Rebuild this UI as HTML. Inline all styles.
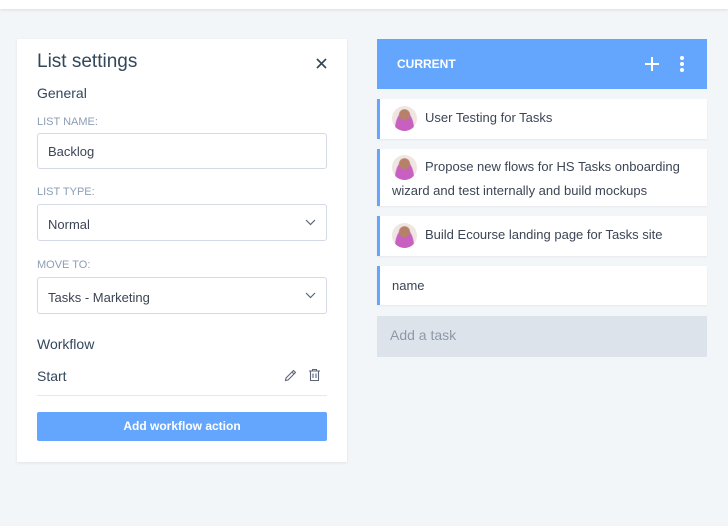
<!DOCTYPE html>
<html><head><style>
*{box-sizing:border-box;margin:0;padding:0}
body{width:728px;height:526px;background:#f3f6f9;font-family:"Liberation Sans",sans-serif;position:relative;overflow:hidden;color:#33475b}
.top{position:absolute;left:0;top:0;width:728px;height:9px;background:#fff;box-shadow:0 1px 3px rgba(0,0,0,.1)}
.panel{position:absolute;left:17px;top:39px;width:330px;height:423px;background:#fff;box-shadow:0 1px 3px rgba(0,0,0,.08)}
.a{position:absolute}
.lbl{font-size:11px;color:#8c9db3;left:20px}
.inp{left:20px;width:290px;border:1px solid #d4d9e4;border-radius:3px;font-size:13px;padding:0 10px;color:#3c4555}
.chev{position:absolute;right:10px;top:14px}
.hdr{position:absolute;left:377px;top:39px;width:330px;height:50px;background:#64a6fe;color:#fff}
.card{position:absolute;left:377px;width:330px;background:#fff;border-left:3px solid #64a6fe;font-size:13px;color:#3c4555;box-shadow:0 1px 2px rgba(0,0,0,.06)}
.av{display:inline-block;width:25px;height:25px;border-radius:50%;background:radial-gradient(circle at 50% 35%,#b7806a 0 5px,transparent 6px),radial-gradient(ellipse at 50% 95%,#c760c0 0 9px,transparent 10px),#efe6e2;vertical-align:middle;margin-right:8px}
</style></head><body>
<div class="top"></div>
<div class="panel">
<div class="a" style="left:20px;top:12px;font-size:19px;color:#33475b">List settings</div>
<svg class="a" style="left:299px;top:19px" width="11" height="11" viewBox="0 0 11 11"><path d="M1 1L10 10M10 1L1 10" stroke="#33475b" stroke-width="1.6"/></svg>
<div class="a" style="left:20px;top:46px;font-size:14px">General</div>
<div class="a lbl" style="top:77px">LIST NAME:</div>
<div class="a inp" style="top:94px;height:36px;line-height:35px">Backlog</div>
<div class="a lbl" style="top:147px">LIST TYPE:</div>
<div class="a inp" style="top:165px;height:37px;line-height:39px">Normal<svg class="chev" width="11" height="7" viewBox="0 0 11 7"><path d="M1 1L5.5 5.5L10 1" stroke="#5a6678" fill="none" stroke-width="1.2"/></svg></div>
<div class="a lbl" style="top:220px">MOVE TO:</div>
<div class="a inp" style="top:238px;height:37px;line-height:39px">Tasks - Marketing<svg class="chev" width="11" height="7" viewBox="0 0 11 7"><path d="M1 1L5.5 5.5L10 1" stroke="#5a6678" fill="none" stroke-width="1.2"/></svg></div>
<div class="a" style="left:20px;top:297px;font-size:14px">Workflow</div>
<div class="a" style="left:20px;top:329px;font-size:14px">Start</div>
<svg class="a" style="left:267px;top:330px" width="13" height="13" viewBox="0 0 13 13"><path d="M1.5 11.5L2 9L9.5 1.5L11.5 3.5L4 11Z M8 3L10 5" stroke="#5a6678" fill="none" stroke-width="1.1"/></svg>
<svg class="a" style="left:291px;top:329px" width="13" height="14" viewBox="0 0 13 14"><path d="M1 3H12M4.5 3V1.5H8.5V3M2.5 3V12.5H10.5V3M5 5.5V10M8 5.5V10" stroke="#5a6678" fill="none" stroke-width="1.1"/></svg>
<div class="a" style="left:20px;top:356px;width:290px;height:1px;background:#e5e8ee"></div>
<div class="a" style="left:20px;top:373px;width:290px;height:29px;background:#64a6fe;border-radius:2px;color:#fff;font-size:12px;font-weight:bold;text-align:center;line-height:29px">Add workflow action</div>
</div>
<div class="hdr"><div class="a" style="left:20px;top:18px;font-size:12px;font-weight:bold">CURRENT</div>
<svg class="a" style="left:267px;top:17px" width="16" height="16" viewBox="0 0 16 16"><path d="M8 1V15M1 8H15" stroke="#fff" stroke-width="2"/></svg>
<svg class="a" style="left:302px;top:16px" width="6" height="18" viewBox="0 0 6 18"><circle cx="3" cy="3" r="2" fill="#fff"/><circle cx="3" cy="9" r="2" fill="#fff"/><circle cx="3" cy="15" r="2" fill="#fff"/></svg></div>
<div class="card" style="top:99px;height:40px;padding:7px 12px"><span class="av"></span>User Testing for Tasks</div>
<div class="card" style="top:149px;height:57px;padding:6px 12px;line-height:21px"><span class="av"></span>Propose new flows for HS Tasks onboarding wizard and test internally and build mockups</div>
<div class="card" style="top:216px;height:40px;padding:7px 12px"><span class="av"></span>Build Ecourse landing page for Tasks site</div>
<div class="card" style="top:266px;height:39px;padding:0 12px;line-height:39px">name</div>
<div class="a" style="left:377px;top:316px;width:330px;height:41px;background:#dde3ea;color:#8e99a8;font-size:14px;line-height:39px;padding-left:13px">Add a task</div>
</body></html>
